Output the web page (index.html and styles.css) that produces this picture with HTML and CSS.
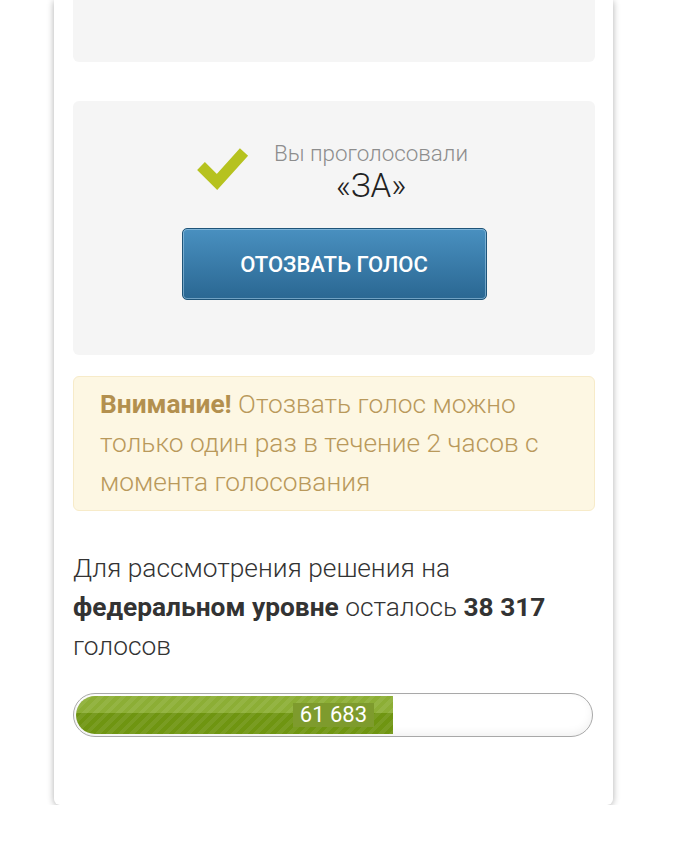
FILE: index.html
```html
<!DOCTYPE html>
<html lang="ru">
<head>
<meta charset="utf-8">
<title>Голосование</title>
<link rel="stylesheet" href="styles.css">
</head>
<body>
<div class="card">
  <div class="box box-top"></div>
  <div class="box vote-box">
    <div class="voted">
      <svg class="check" width="56" height="46" viewBox="0 0 56 46" aria-hidden="true">
        <polyline points="6,21 22,37 49,7" fill="none" stroke="#b6c21f" stroke-width="11" stroke-linecap="butt" stroke-linejoin="miter"/>
      </svg>
      <div class="voted-text">
        <div class="voted-label">Вы проголосовали</div>
        <div class="voted-value">«ЗА»</div>
      </div>
    </div>
    <button class="revoke">ОТОЗВАТЬ ГОЛОС</button>
  </div>
  <div class="warning"><b>Внимание!</b> Отозвать голос можно только один раз в течение 2 часов с момента голосования</div>
  <p class="remain">Для рассмотрения решения на <b>федеральном уровне</b> осталось <b>38 317</b> голосов</p>
  <div class="progress">
    <div class="progress-fill" style="width: 61.683%"><span class="progress-label">61 683</span></div>
  </div>
</div>
</body>
</html>
```
FILE: styles.css
```css
html, body {
  margin: 0;
  padding: 0;
  background: #ffffff;
}
body {
  font-family: Roboto, "Liberation Sans", sans-serif;
  color: #333333;
}
.card {
  width: 522px;
  margin-left: 54px;
  padding: 0 18px 68px 19px;
  background: #ffffff;
  border-radius: 0 0 6px 6px;
  box-shadow: 0 1px 7px rgba(0, 0, 0, 0.32);
}
.box {
  background: #f5f5f5;
  border-radius: 6px;
}
.box-top {
  height: 62px;
  border-radius: 0 0 6px 6px;
}
.vote-box {
  margin-top: 39px;
  padding: 37px 0 55px;
  display: flex;
  flex-direction: column;
  align-items: center;
}
.voted {
  display: flex;
  align-items: flex-start;
  gap: 23px;
  margin-right: 5px;
}
.check {
  margin-top: 7px;
  filter: blur(0.4px);
}
.voted-text {
  text-align: center;
}
.voted-label {
  font-size: 22.4px;
  font-weight: 300;
  color: #8d8d8d;
  line-height: 30px;
}
.voted-value {
  font-size: 33px;
  font-weight: 300;
  color: #222222;
  line-height: 36px;
}
.revoke {
  margin-top: 24px;
  width: 305px;
  height: 72px;
  border: 1px solid #1f5478;
  border-radius: 5px;
  background: linear-gradient(#4990c0, #2a6792);
  box-shadow: inset 0 0 0 1px rgba(170, 210, 235, 0.55);
  color: #ffffff;
  font-family: Roboto, "Liberation Sans", sans-serif;
  font-size: 22px;
  font-weight: 500;
  padding: 0;
}
.warning {
  margin-top: 21px;
  background: #fdf7e3;
  border: 1px solid #f7ebc9;
  border-radius: 6px;
  padding: 8px 20px 8px 26px;
  font-size: 26.3px;
  font-weight: 300;
  line-height: 39px;
  color: #b9995b;
}
.warning b {
  font-weight: 700;
  color: #b3904f;
}
.remain {
  margin: 38px 0 0;
  font-size: 26.3px;
  font-weight: 300;
  line-height: 39px;
  color: #333333;
}
.remain b {
  font-weight: 700;
}
.progress {
  margin-top: 27px;
  width: 514px;
  height: 38px;
  padding: 2px;
  border: 1px solid #a8a8a8;
  border-radius: 23px;
  background: #ffffff;
  box-shadow: inset 0 -3px 8px rgba(0, 0, 0, 0.06);
}
.progress-fill {
  height: 100%;
  border-radius: 20px 0 0 20px;
  background:
    repeating-linear-gradient(135deg, rgba(255,255,255,0.07) 0 4px, rgba(255,255,255,0) 4px 8px),
    linear-gradient(#8cae35 0, #8cae35 45%, #6f9511 45%, #6f9511 100%);
  display: flex;
  align-items: center;
  justify-content: flex-end;
}
.progress-label {
  margin-right: 19px;
  padding: 0 7px;
  height: 24px;
  line-height: 24px;
  background: #7e9b2d;
  color: #ffffff;
  font-size: 22px;
  font-weight: 400;
}
```
